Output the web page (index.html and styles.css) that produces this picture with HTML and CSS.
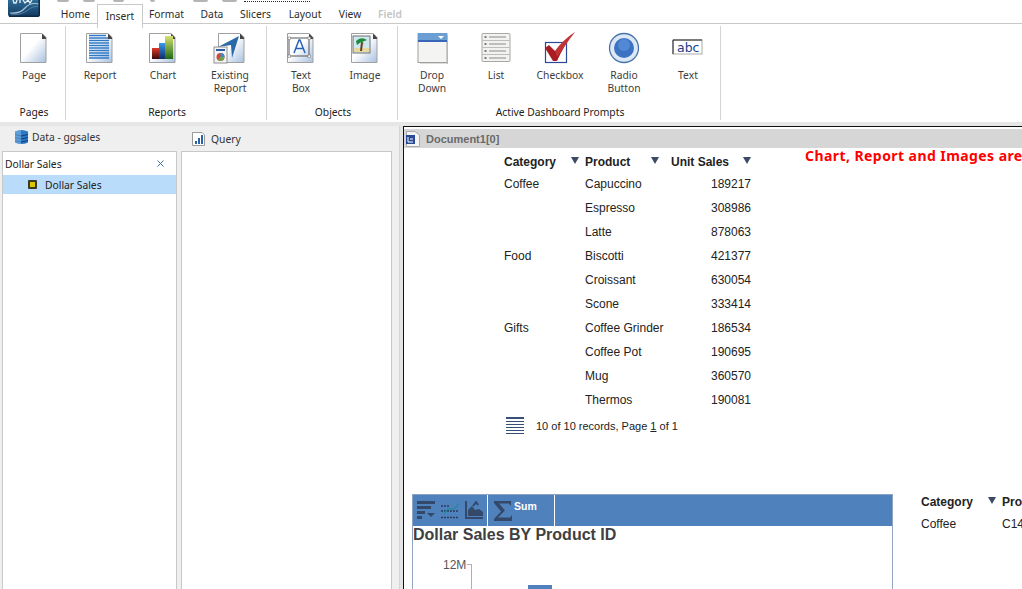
FILE: index.html
```html
<!DOCTYPE html>
<html>

<head>
  <title>Document1</title>
  <link rel="stylesheet" href="styles.css">
</head>

<body>
  <div class="app">

    <div class="topbar">
      <div class="logo">
        <svg width="32" height="17" viewBox="0 0 32 17">
          <path d="M0 0H32V14Q32 17 29 17H3Q0 17 0 14Z" fill="url(#logo-fill)" />
          <path d="M2 13Q12 14 17 8T31 4" fill="none" stroke="#a8c8dc" stroke-width="1.200" />
          <path d="M3 15Q14 15 20 10T31 7" fill="none" stroke="#5f8fb0" stroke-width=".8" />
          <path d="M5 0L6 3H8L9 0M12 0V3M15 0L17 3L20 0L22 3L24 0" fill="none" stroke="#e8eef4" stroke-width="1.300" />
          <path d="M31.200 0V15Q31.200 16.200 29 16.200H1" fill="none" stroke="#0b2a48" stroke-width="1.500" />
        </svg>
      </div>
      <div class="quick">
        <span class="quick-stub quick-a"></span>
        <span class="quick-stub quick-b"></span>
        <span class="quick-stub quick-c"></span>
        <span class="quick-stub quick-d"></span>
        <span class="quick-stub quick-e"></span>
        <span class="quick-stub quick-f"></span>
        <span class="quick-dots"></span>
      </div>
      <div class="tabs">
        <span class="tab tab-home">Home</span>
        <span class="tab tab-insert">Insert</span>
        <span class="tab tab-format">Format</span>
        <span class="tab tab-data">Data</span>
        <span class="tab tab-slicers">Slicers</span>
        <span class="tab tab-layout">Layout</span>
        <span class="tab tab-view">View</span>
        <span class="tab tab-field">Field</span>
      </div>
    </div>

    <div class="ribbon">
      <div class="group group-pages">
        <div class="group-items">
          <div class="btn">
            <svg class="btn-icon" width="32" height="32" viewBox="0 0 32 32"><use href="#sheet" /></svg>
            <span>Page</span>
          </div>
        </div>
        <div class="group-label">Pages</div>
      </div>

      <div class="group group-reports">
        <div class="group-items">
          <div class="btn">
            <svg class="btn-icon" width="32" height="32" viewBox="0 0 32 32">
              <use href="#sheet" />
              <path d="M5 3.500H22M5 6H24M5 8.500H25M5 11H25M5 13.500H25M5 16H25M5 18.500H25M5 21H25M5 23.500H25M5 26H25" stroke="#2f78c4" stroke-width="1.300" />
            </svg>
            <span>Report</span>
          </div>
          <div class="btn btn-chart">
            <svg class="btn-icon" width="32" height="32" viewBox="0 0 32 32">
              <use href="#sheet" />
              <rect x="5" y="16" width="7" height="11" fill="url(#bar-red)" />
              <rect x="12" y="11" width="6" height="16" fill="url(#bar-blue)" />
              <rect x="18" y="4" width="8" height="23" fill="url(#bar-green)" />
            </svg>
            <span>Chart</span>
          </div>
          <div class="btn btn-existing">
            <svg class="btn-icon" width="36" height="32" viewBox="0 0 36 32">
              <g transform="translate(4 0)"><use href="#sheet" /></g>
              <path d="M6 15L27 4L20 26L19 13Z" fill="#2a6aa8" />
              <rect x="2" y="15" width="13" height="16" fill="#f4f4f4" stroke="#909090" />
              <rect x="4" y="17" width="9" height="2" fill="#2a5ea8" />
              <circle cx="8.500" cy="25" r="4" fill="#d04a3a" />
              <path d="M8.500 25V21A4 4 0 0 1 12.500 25Z" fill="#3c8ad0" />
              <path d="M8.500 25H12.500A4 4 0 0 1 6 28Z" fill="#6aa84a" />
            </svg>
            <span>Existing<br>Report</span>
          </div>
        </div>
        <div class="group-label">Reports</div>
      </div>

      <div class="group group-objects">
        <div class="group-items">
          <div class="btn">
            <svg class="btn-icon" width="32" height="32" viewBox="0 0 32 32">
              <use href="#sheet" />
              <rect x="4" y="6" width="20" height="18" fill="none" stroke="#555" />
              <rect x="3" y="5" width="2.500" height="2.500" fill="#fff" stroke="#777" stroke-width=".6" />
              <rect x="23" y="5" width="2.500" height="2.500" fill="#fff" stroke="#777" stroke-width=".6" />
              <rect x="3" y="23" width="2.500" height="2.500" fill="#fff" stroke="#777" stroke-width=".6" />
              <rect x="23" y="23" width="2.500" height="2.500" fill="#fff" stroke="#777" stroke-width=".6" />
              <path d="M9 21L14 8H15L20 21M11 16.500H18" fill="none" stroke="#2a62b8" stroke-width="1.500" />
            </svg>
            <span>Text<br>Box</span>
          </div>
          <div class="btn">
            <svg class="btn-icon" width="32" height="32" viewBox="0 0 32 32">
              <use href="#sheet" />
              <rect x="4" y="4" width="17" height="17" fill="#cfe7ef" stroke="#707070" />
              <rect x="5" y="16" width="15" height="4" fill="#e6d9a0" />
              <path d="M12 19L13 10" stroke="#6a3a1a" stroke-width="2" />
              <path d="M7 9Q12 4 18 8L13 10L16 13L12 10L8 13Z" fill="#1f8a3a" />
            </svg>
            <span>Image</span>
          </div>
        </div>
        <div class="group-label">Objects</div>
      </div>

      <div class="group group-prompts">
        <div class="group-items">
          <div class="btn">
            <svg class="btn-icon" width="32" height="32" viewBox="0 0 32 32">
              <rect x="2" y="1.500" width="29" height="29" fill="#f4f4f2" stroke="#a0a0a0" />
              <rect x="2" y="1" width="29" height="9" fill="#6b9fd4" />
              <rect x="2" y="8" width="29" height="2" fill="#3a66b8" />
              <path d="M22 4H28L25 7Z" fill="#fff" />
              <path d="M31.500 3V32H4" fill="none" stroke="#b8b8b8" stroke-width="1" />
            </svg>
            <span>Drop<br>Down</span>
          </div>
          <div class="btn">
            <svg class="btn-icon" width="32" height="32" viewBox="0 0 32 32">
              <rect x="2" y="1.500" width="28" height="28" rx="1" fill="#f2f2f0" stroke="#a8a8a8" />
              <path d="M2 8.500H30M2 15.500H30M2 22.500H30" stroke="#bdbdbd" />
              <path d="M9 5H26M9 12H26M9 19H26M9 26H26" stroke="#8a8a8a" />
              <path d="M4.500 5H6.500M4.500 12H6.500M4.500 19H6.500M4.500 26H6.500" stroke="#555" stroke-width="1.500" />
            </svg>
            <span>List</span>
          </div>
          <div class="btn">
            <svg class="btn-icon" width="32" height="32" viewBox="0 0 32 32">
              <rect x="1.500" y="10.500" width="21" height="20" fill="#fff" stroke="#2a4a98" stroke-width="1.200" />
              <path d="M1 16L5 13L11 19Q19 8 31 0Q20 13 13 29H9Z" fill="#a81c22" />
              <path d="M11 19Q19 8 31 0L13 25Z" fill="#d84a4a" opacity=".5" />
            </svg>
            <span>Checkbox</span>
          </div>
          <div class="btn">
            <svg class="btn-icon" width="32" height="32" viewBox="0 0 32 32">
              <circle cx="16" cy="16" r="14.500" fill="#dce8f6" stroke="#4a74ad" stroke-width="1.300" />
              <circle cx="16" cy="16" r="10" fill="#3c72c2" />
              <circle cx="16" cy="13" r="6" fill="#5c92dc" opacity=".7" />
            </svg>
            <span>Radio<br>Button</span>
          </div>
          <div class="btn">
            <svg class="btn-icon" width="32" height="32" viewBox="0 0 32 32">
              <rect x="1" y="8" width="29" height="14" fill="#fff" stroke="#aaa" />
              <path d="M1 22V8H30" fill="none" stroke="#222" />
              <text x="5" y="20" class="abc">abc</text>
            </svg>
            <span>Text</span>
          </div>
        </div>
        <div class="group-label">Active Dashboard Prompts</div>
      </div>
    </div>

    <div class="workspace">
      <div class="side">
        <div class="pane pane-data">
          <div class="pane-title pane-title-data">
            <svg width="15" height="16" viewBox="0 0 15 16">
              <path d="M1 2.500Q7.500 -.5 14 2.500V13.500Q7.500 16.500 1 13.500Z" fill="#2a7ac8" />
              <path d="M1 5.500Q7.500 8.500 14 5.500M1 8.500Q7.500 11.500 14 8.500M1 11.500Q7.500 14.500 14 11.500" fill="none" stroke="#123a78" stroke-width="1" />
              <path d="M1 2.500Q4 1 7 1V15Q4 15 1 13.500Z" fill="#8cc4ee" opacity=".5" />
            </svg>
            <span>Data - ggsales</span>
          </div>
          <div class="pane-box">
            <div class="filter-row">
              <span>Dollar Sales</span>
              <svg class="filter-close" width="7" height="7" viewBox="0 0 7 7">
                <path d="M.5 .5L6.500 6.500M6.500 .5L.5 6.500" stroke="#3a6a9a" stroke-width="1" />
              </svg>
            </div>
            <div class="tree-row">
              <span class="measure-icon"></span>
              <span>Dollar Sales</span>
            </div>
          </div>
        </div>
        <div class="pane pane-query">
          <div class="pane-title pane-title-query">
            <svg width="15" height="16" viewBox="0 0 15 16">
              <path d="M1.500 1.500H11L13.500 4V14.500H1.500Z" fill="#fff" stroke="#999" />
              <path d="M4 13V10H6V13ZM7 13V7H9V13ZM10 13V4H12V13Z" fill="#2a62a8" />
            </svg>
            <span>Query</span>
          </div>
          <div class="pane-box"></div>
        </div>
      </div>

      <div class="doc">
        <div class="doc-title">
          <svg width="16" height="16" viewBox="0 0 16 16">
            <path d="M1.500 .5H10L14.500 4V15.500H1.500Z" fill="#f4f4f4" stroke="#aaa" />
            <rect x="1" y="4" width="9" height="9" fill="#2a4a98" />
            <path d="M3 6V11H8M5 8H8" fill="none" stroke="#fff" />
          </svg>
          <span>Document1[0]</span>
        </div>

        <div class="canvas">
          <div class="notice">Chart, Report and Images are</div>

          <table class="report report-main">
            <tr class="report-head">
              <th class="col-cat">Category<i class="sort"></i></th>
              <th class="col-prod">Product<i class="sort"></i></th>
              <th class="col-sales">Unit Sales<i class="sort"></i></th>
            </tr>
            <tr><td>Coffee</td><td>Capuccino</td><td class="num">189217</td></tr>
            <tr><td></td><td>Espresso</td><td class="num">308986</td></tr>
            <tr><td></td><td>Latte</td><td class="num">878063</td></tr>
            <tr><td>Food</td><td>Biscotti</td><td class="num">421377</td></tr>
            <tr><td></td><td>Croissant</td><td class="num">630054</td></tr>
            <tr><td></td><td>Scone</td><td class="num">333414</td></tr>
            <tr><td>Gifts</td><td>Coffee Grinder</td><td class="num">186534</td></tr>
            <tr><td></td><td>Coffee Pot</td><td class="num">190695</td></tr>
            <tr><td></td><td>Mug</td><td class="num">360570</td></tr>
            <tr><td></td><td>Thermos</td><td class="num">190081</td></tr>
          </table>

          <div class="pager">
            <svg width="18" height="18" viewBox="0 0 18 18">
              <path d="M0 1H18" stroke="#36507a" stroke-width="2" />
              <path d="M0 4.500H18M0 7.500H18M0 10.500H18M0 13.500H18M0 16.500H18" stroke="#36507a" stroke-width="1" />
            </svg>
            <span>10 of 10 records, Page <u>1</u> of 1</span>
          </div>

          <div class="chart">
            <div class="chart-tools">
              <div class="tool-set">
                <svg width="18" height="18" viewBox="0 0 18 18">
                  <path d="M0 0H18V3H0ZM0 5H14V8H0ZM0 10H8V13H0ZM0 15H5V18H0ZM10 12H18L14 16Z" fill="#34486a" />
                </svg>
                <svg width="18" height="18" viewBox="0 0 18 18">
                  <path d="M0 5H8M0 10H18M0 16.500H18" stroke="#2c3c5c" stroke-width="1.400" stroke-dasharray="2 1" />
                  <path d="M3 13Q7 6 10 8T18 2" fill="none" stroke="#1f8a9a" stroke-width="1.200" />
                </svg>
                <svg width="18" height="18" viewBox="0 0 18 18">
                  <path d="M0 0H2V16H18V18H0ZM3 15V9L7 5L10 9L14 8L18 11V15Z" fill="#34486a" />
                  <path d="M8 5L11 1L13 4" fill="none" stroke="#34486a" stroke-width="2" />
                </svg>
              </div>
              <div class="tool-sum">
                <svg width="18" height="20" viewBox="0 0 18 20">
                  <path d="M0 0H17V5L15 2.500H5L11 9.500L4 16.500H16L18 14V20H0V18L7 10.500L0 2Z" fill="#34486a" />
                </svg>
                <span>Sum</span>
              </div>
            </div>
            <div class="chart-title">Dollar Sales BY Product ID</div>
            <div class="plot">
              <span class="axis-label">12M</span>
              <span class="axis"></span>
              <span class="bar"></span>
            </div>
          </div>

          <table class="report report-side">
            <tr class="report-head">
              <th class="col-side">Category<i class="sort"></i></th>
              <th>Pro</th>
            </tr>
            <tr><td>Coffee</td><td>C14</td></tr>
          </table>
        </div>
      </div>
    </div>

  </div>

  <svg class="defs" width="0" height="0">
    <defs>
      <linearGradient id="fold" x1="0" y1="0" x2="1" y2="1">
        <stop offset="0.450" stop-color="#ffffff" />
        <stop offset="1" stop-color="#a8c0e0" />
      </linearGradient>
      <linearGradient id="logo-fill" x1="0" y1="0" x2="0" y2="1">
        <stop offset="0" stop-color="#2f6c98" />
        <stop offset="1" stop-color="#123a5e" />
      </linearGradient>
      <linearGradient id="bar-red" x1="0" y1="0" x2="0" y2="1">
        <stop offset="0" stop-color="#e03a2a" />
        <stop offset="1" stop-color="#3a0a0a" />
      </linearGradient>
      <linearGradient id="bar-blue" x1="0" y1="0" x2="0" y2="1">
        <stop offset="0" stop-color="#3a9ae8" />
        <stop offset="1" stop-color="#0e2a6a" />
      </linearGradient>
      <linearGradient id="bar-green" x1="0" y1="0" x2="0" y2="1">
        <stop offset="0" stop-color="#d8e070" />
        <stop offset="1" stop-color="#1e6a14" />
      </linearGradient>
      <g id="sheet">
        <path d="M2.500 1.500H24L28 5.500V30.500H2.500Z" fill="url(#fold)" stroke="#a0a0a0" />
        <path d="M24 1.500L28 5.500V7H24Z" fill="#444" />
      </g>
    </defs>
  </svg>
</body>

</html>
```

FILE: styles.css
```css
html,
body {
  margin: 0;
  height: 100%;
  overflow: hidden;
  background: white;
}

.app {
  width: 1022px;
  height: 589px;
  overflow: hidden;
  display: flex;
  flex-direction: column;
  font-family: "Noto Sans", Tahoma, sans-serif;
  font-size: 10.3px;
  color: #2c2c2c;
}

.defs {
  position: absolute;
}

/* top bar */

.topbar {
  position: relative;
  height: 24px;
  flex: none;
  border-bottom: 1px solid #c9c9c9;
  box-sizing: border-box;
}

.logo {
  position: absolute;
  left: 8px;
  top: 0;
  height: 17px;
}

.quick-stub {
  position: absolute;
  top: 0;
  height: 2px;
  background: #b4b4b4;
  border-radius: 0 0 3px 3px;
}

.quick-a { left: 57px; width: 12px; }
.quick-b { left: 83px; width: 12px; }
.quick-c { left: 113px; width: 11px; }
.quick-d { left: 150px; width: 5px; }
.quick-e { left: 193px; width: 15px; }
.quick-f { left: 222px; width: 15px; }

.quick-dots {
  position: absolute;
  left: 244px;
  top: 1px;
  width: 66px;
  border-top: 1px dotted #222;
}

.tabs {
  display: flex;
  height: 23px;
  padding-left: 54px;
}

.tab {
  box-sizing: border-box;
  height: 24px;
  padding-top: 7px;
  text-align: center;
  line-height: 15px;
}

.tab-home { width: 43px; }
.tab-insert {
  width: 46px;
  padding-top: 4px;
  margin-top: 4px;
  background: white;
  border: 1px solid #c9c9c9;
  border-bottom: none;
}
.tab-format { width: 47px; }
.tab-data { width: 44px; }
.tab-slicers { width: 43px; }
.tab-layout { width: 56px; }
.tab-view { width: 34px; }
.tab-field { width: 46px; color: #c4c4c4; font-weight: 600; }

/* ribbon */

.ribbon {
  display: flex;
  height: 98px;
  flex: none;
}

.group {
  box-sizing: border-box;
  height: 94px;
  margin-top: 2px;
  border-right: 1px solid #d4d4d4;
  display: flex;
  flex-direction: column;
}

.group-pages { width: 66px; padding-left: 3px; }
.group-reports { width: 201px; padding-left: 2px; }
.group-objects { width: 131px; padding-left: 2px; }
.group-prompts { width: 323px; padding-left: 2px; }

.group-items {
  display: flex;
  flex: 1;
  padding-top: 6px;
}

.group-label {
  height: 15px;
  line-height: 15px;
  text-align: center;
  color: #222;
}

.btn {
  width: 64px;
  display: flex;
  flex-direction: column;
  align-items: center;
  text-align: center;
  line-height: 13px;
  color: #3c3c3c;
}

.btn-chart { width: 62px; }
.btn-existing { width: 72px; }

.btn-icon {
  display: block;
  height: 32px;
  margin-bottom: 5px;
}

.abc {
  font-family: "DejaVu Sans", sans-serif;
  font-size: 12.500px;
  fill: #22408a;
}

/* side panes */

.workspace {
  flex: 1;
  min-height: 0;
  display: flex;
  margin-top: 4px;
  background: #e4e4e4;
  position: relative;
}

.workspace::before {
  content: "";
  position: absolute;
  left: 0;
  right: 0;
  top: -4px;
  height: 4px;
  background: #e6e6e6;
}

.side {
  box-sizing: border-box;
  width: 400px;
  flex: none;
  display: flex;
  padding-left: 2px;
  background: #efefef;
  border-right: 1px solid #d4d4d4;
}

.pane {
  display: flex;
  flex-direction: column;
}

.pane-data { width: 175px; }
.pane-query { width: 211px; margin-left: 4px; }

.pane-title {
  height: 25px;
  display: flex;
  align-items: center;
  gap: 5px;
  flex: none;
  color: #333;
}

.pane-title-data { padding-left: 12px; gap: 3px; }
.pane-title-data svg { margin-top: -3px; }
.pane-title-data span { margin-top: -3px; }
.pane-title-query { padding-left: 10px; }

.pane-box {
  flex: 1;
  background: white;
  border: 1px solid #c8c8c8;
  border-bottom: none;
}

.filter-row {
  height: 23px;
  display: flex;
  align-items: center;
  justify-content: space-between;
  padding: 0 12px 0 2px;
  color: #222;
}

.tree-row {
  height: 19px;
  display: flex;
  align-items: center;
  gap: 8px;
  padding-left: 25px;
  background: #b9dcfb;
  color: #222;
}

.measure-icon {
  box-sizing: border-box;
  width: 9px;
  height: 9px;
  background: #d8c800;
  border: 2px solid #3a3a2a;
  border-radius: 1px;
}

/* document */

.doc {
  flex: 1;
  min-width: 0;
  margin-left: 3px;
  background: white;
  border-top: 1px solid #111;
  border-left: 1px solid #111;
  padding-top: 2px;
  display: flex;
  flex-direction: column;
}

.doc-title {
  height: 19px;
  flex: none;
  display: flex;
  align-items: center;
  gap: 5px;
  padding-left: 1px;
  background: #d6d6d6;
  color: #6a6a6a;
  font-weight: 700;
  font-size: 11px;
  font-family: "Liberation Sans", Arial, sans-serif;
}

.canvas {
  position: relative;
  flex: 1;
  font-family: "Liberation Sans", Arial, sans-serif;
  font-size: 12px;
  color: #222;
}

.notice {
  position: absolute;
  left: 401px;
  top: -1px;
  white-space: nowrap;
  font-family: "Noto Sans", sans-serif;
  font-weight: 700;
  font-size: 14px;
  letter-spacing: .43px;
  line-height: 17px;
  color: #f00;
}

.report {
  position: absolute;
  border-collapse: collapse;
}

.report td,
.report th {
  padding: 0;
  text-align: left;
  white-space: nowrap;
  height: 24px;
}

.report th {
  position: relative;
  font-weight: 700;
  height: 21px;
  padding-top: 2px;
}

.report-main {
  left: 100px;
  top: 1px;
}

.col-cat { width: 81px; }
.col-prod { width: 86px; }
.col-sales { width: 80px; }

.report .num {
  text-align: right;
}

.sort {
  position: absolute;
  top: 8px;
  width: 0;
  height: 0;
  border-left: 4px solid transparent;
  border-right: 4px solid transparent;
  border-top: 7px solid #3c4a66;
}

.col-cat .sort,
.col-side .sort { right: 6px; }
.col-prod .sort { right: 12px; }
.col-sales .sort { right: 0; }

.report-side {
  left: 517px;
  top: 341px;
  width: 120px;
}

.col-side { width: 81px; }

.pager {
  position: absolute;
  left: 102px;
  top: 269px;
  display: flex;
  align-items: center;
  gap: 12px;
  font-size: 11px;
}

/* chart */

.chart {
  position: absolute;
  left: 8px;
  top: 346px;
  width: 481px;
  height: 200px;
  box-sizing: border-box;
  border-left: 1px solid #8fa4c0;
  border-right: 1px solid #8fa4c0;
  border-top: 1px solid #8fa4c0;
}

.chart-tools {
  height: 31px;
  display: flex;
  background: #4f81bd;
}

.tool-set {
  width: 75px;
  display: flex;
  gap: 6px;
  padding: 6px 0 0 4px;
  box-sizing: border-box;
  border-right: 1px solid white;
}

.tool-sum {
  width: 67px;
  box-sizing: border-box;
  display: flex;
  gap: 2px;
  padding: 6px 0 0 6px;
  border-right: 1px solid white;
  color: white;
  font-weight: 700;
  font-size: 10.500px;
}

.tool-sum span {
  margin-top: -1px;
}

.chart-title {
  font-size: 16px;
  font-weight: 700;
  line-height: 18px;
  color: #404040;
}

.plot {
  position: relative;
}

.axis-label {
  position: absolute;
  left: 30px;
  top: 14px;
  color: #555;
}

.axis {
  position: absolute;
  left: 54px;
  top: 20px;
  width: 5px;
  height: 100px;
  box-sizing: border-box;
  border-top: 1px solid #b0b0b0;
  border-right: 1px solid #b0b0b0;
}

.bar {
  position: absolute;
  left: 115px;
  top: 41px;
  width: 24px;
  height: 60px;
  background: #4f81bd;
}
```
